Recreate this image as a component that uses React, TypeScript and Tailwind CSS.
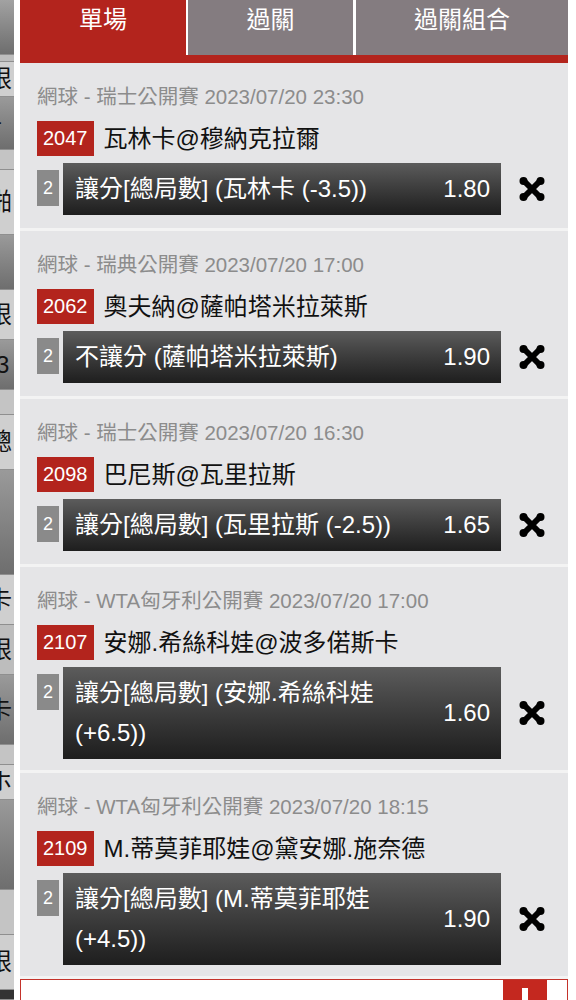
const bets = [
  {
    head: "網球 - 瑞士公開賽 2023/07/20 23:30",
    id: "2047",
    match: "瓦林卡@穆納克拉爾",
    lines: ["讓分[總局數] (瓦林卡 (-3.5))"],
    odds: "1.80",
  },
  {
    head: "網球 - 瑞典公開賽 2023/07/20 17:00",
    id: "2062",
    match: "奧夫納@薩帕塔米拉萊斯",
    lines: ["不讓分 (薩帕塔米拉萊斯)"],
    odds: "1.90",
  },
  {
    head: "網球 - 瑞士公開賽 2023/07/20 16:30",
    id: "2098",
    match: "巴尼斯@瓦里拉斯",
    lines: ["讓分[總局數] (瓦里拉斯 (-2.5))"],
    odds: "1.65",
  },
  {
    head: "網球 - WTA匈牙利公開賽 2023/07/20 17:00",
    id: "2107",
    match: "安娜.希絲科娃@波多偌斯卡",
    lines: ["讓分[總局數] (安娜.希絲科娃", "(+6.5))"],
    odds: "1.60",
  },
  {
    head: "網球 - WTA匈牙利公開賽 2023/07/20 18:15",
    id: "2109",
    match: "M.蒂莫菲耶娃@黛安娜.施奈德",
    lines: ["讓分[總局數] (M.蒂莫菲耶娃", "(+4.5))"],
    odds: "1.90",
  },
];

// clipped page that sits behind the slip
const under = [
  { h: 55, bg: "bg-gradient-to-b from-[#a2a2a2] to-[#6e6e6e]", t: "" },
  { h: 7, bg: "bg-[#bdbdbd]", t: "" },
  { h: 35, bg: "bg-[#cfcfcf]", t: "限" },
  { h: 53, bg: "bg-gradient-to-b from-[#9a9a9a] to-[#6e6e6e]", t: "+" },
  { h: 20, bg: "bg-[#c4c4c4]", t: "" },
  { h: 65, bg: "bg-[#cfcfcf]", t: "啪" },
  { h: 55, bg: "bg-gradient-to-b from-[#9a9a9a] to-[#6e6e6e]", t: "" },
  { h: 50, bg: "bg-[#cfcfcf]", t: "限" },
  { h: 50, bg: "bg-gradient-to-b from-[#9a9a9a] to-[#6e6e6e]", t: "-3" },
  { h: 25, bg: "bg-[#c4c4c4]", t: "" },
  { h: 55, bg: "bg-[#cfcfcf]", t: "總" },
  { h: 105, bg: "bg-gradient-to-b from-[#9a9a9a] to-[#6e6e6e]", t: "" },
  { h: 50, bg: "bg-[#cfcfcf]", t: "卡" },
  { h: 50, bg: "bg-[#bdbdbd]", t: "限" },
  { h: 70, bg: "bg-gradient-to-b from-[#9a9a9a] to-[#6e6e6e]", t: "卡" },
  { h: 20, bg: "bg-[#c4c4c4]", t: "" },
  { h: 35, bg: "bg-[#cfcfcf]", t: "ホ" },
  { h: 90, bg: "bg-gradient-to-b from-[#9a9a9a] to-[#6e6e6e]", t: "" },
  { h: 45, bg: "bg-[#c4c4c4]", t: "" },
  { h: 55, bg: "bg-[#cfcfcf]", t: "限" },
  { h: 10, bg: "bg-[#333333]", t: "" },
];

const heights: Record<number, string> = {
  7: "h-[7px]", 10: "h-[10px]", 20: "h-[20px]", 25: "h-[25px]", 35: "h-[35px]",
  45: "h-[45px]", 50: "h-[50px]", 53: "h-[53px]", 55: "h-[55px]", 65: "h-[65px]",
  70: "h-[70px]", 90: "h-[90px]", 105: "h-[105px]",
};

const Cross = () => (
  <svg width="26" height="24" viewBox="0 0 26 24">
    <path d="M5 4 L21 20 M21 4 L5 20" stroke="#000" strokeWidth="6" strokeLinecap="round" />
    <circle cx="4.5" cy="4" r="4" fill="#000" />
    <circle cx="21.5" cy="4" r="4" fill="#000" />
    <circle cx="4.5" cy="20" r="4" fill="#000" />
    <circle cx="21.5" cy="20" r="4" fill="#000" />
  </svg>
);

export default function App() {
  return (
    <div className="h-[1000px] overflow-hidden bg-white flex font-['Liberation_Sans','Noto_Sans_CJK_TC',sans-serif]">
      <div className="w-[14px] shrink-0 flex flex-col overflow-hidden">
        {under.map((u, i) => (
          <div key={i} className={`${heights[u.h]} ${u.bg} shrink-0 flex items-center overflow-hidden border-b border-[#8f8f8f]`}>
            {u.t && <span className="text-[24px] leading-none text-[#111] -ml-[12px] whitespace-nowrap">{u.t}</span>}
          </div>
        ))}
      </div>
      <div className="w-[6px] shrink-0" />

      <div className="w-[548px] shrink-0 flex flex-col">
        <div className="shrink-0 flex h-[55px] gap-[2px] text-white text-[24px] leading-[40px]">
          <div className="w-[166px] bg-[#b3241d] text-center">單場</div>
          <div className="w-[165px] bg-[#847c80] text-center">過關</div>
          <div className="flex-1 ml-[1px] bg-[#847c80] text-center">過關組合</div>
        </div>
        <div className="shrink-0 h-[8px] bg-[#b3241d]" />

        {bets.map((b) => (
          <div
            key={b.id}
            className={`${b.lines.length > 1 ? "h-[206px]" : "h-[168px]"} shrink-0 overflow-hidden bg-[#e5e5e7] border-b-[3px] border-[#f3f3f3] pt-[22px] pl-[17px]`}
          >
            <div className="h-[24px] text-[20.5px] leading-[24px] text-[#8c8c8c] whitespace-nowrap">{b.head}</div>
            <div className="mt-[12px] h-[35px] flex items-center gap-[10px]">
              <span className="h-[35px] px-[6px] bg-[#b3241d] text-white text-[20px] leading-[35px]">{b.id}</span>
              <span className="text-[24px] leading-[35px] text-[#111] whitespace-nowrap">{b.match}</span>
            </div>
            <div className="mt-[7px] flex">
              <div className="mt-[7px] w-[22px] h-[36px] bg-[#8a8a8a] text-white text-[18px] flex items-center justify-center">2</div>
              <div className="ml-[4px] w-[438px] py-[6px] pl-[12px] pr-[11px] flex items-center bg-gradient-to-b from-[#5c5c5c] to-[#1e1e1e] text-white text-[24px] leading-[40px]">
                <div className="flex-1 whitespace-nowrap">
                  {b.lines.map((l) => (
                    <div key={l} className="h-[40px]">{l}</div>
                  ))}
                </div>
                <div>{b.odds}</div>
              </div>
              <div className="flex-1 flex items-center justify-center pr-[5px]">
                <Cross />
              </div>
            </div>
          </div>
        ))}

        <div className="flex-1 min-h-[40px] border border-[#c4332b] bg-white flex justify-end pr-[20px]">
          <div className="w-[44px] bg-[#c4281f] flex justify-center pt-[8px]">
            <div className="w-[6px] h-[20px] bg-white" />
          </div>
        </div>
      </div>
      <div className="flex-1" />
    </div>
  );
}
